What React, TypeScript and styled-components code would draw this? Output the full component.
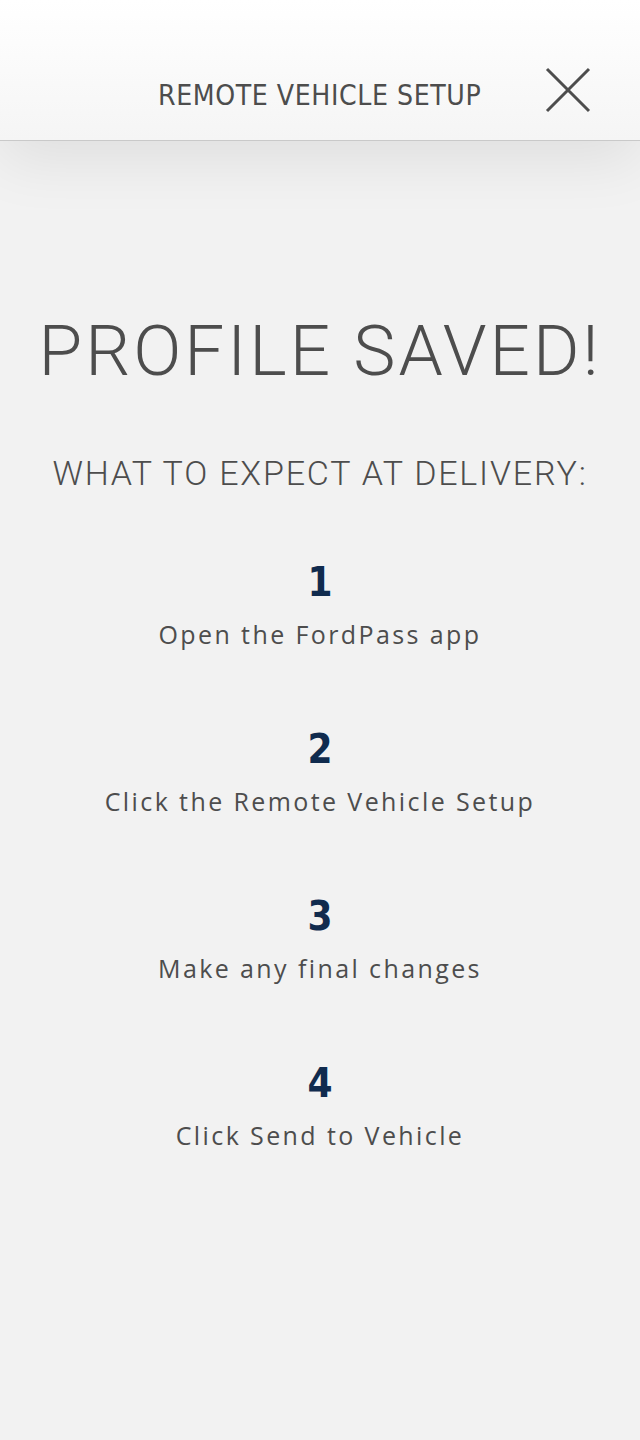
import React from 'react'
import styled, { createGlobalStyle } from 'styled-components'

const ink = '#4d4d4d'
const navy = '#102b4e'
const condensed = '"DejaVu Sans Condensed", "Liberation Sans Narrow", "DejaVu Sans", sans-serif'
const light = 'Roboto, "DejaVu Sans Condensed", sans-serif'

const GlobalStyle = createGlobalStyle`
  html, body {
    margin: 0;
    padding: 0;
    background: #f2f2f2;
  }
  * {
    box-sizing: border-box;
  }
`

const Page = styled.div`
  width: 640px;
  min-height: 1440px;
  background: #f2f2f2;
  display: flex;
  flex-direction: column;
`

const TopBar = styled.header`
  position: relative;
  height: 141px;
  display: flex;
  align-items: center;
  justify-content: center;
  padding-top: 50px;
  background: linear-gradient(180deg, #ffffff 0%, #f5f5f5 100%);
  border-bottom: 1px solid #c9c9c9;
  box-shadow: 0 20px 60px rgba(0, 0, 0, 0.08);
  z-index: 1;
`

const BarTitle = styled.h1`
  margin: 0;
  font-family: ${condensed};
  font-weight: 400;
  font-size: 29px;
  letter-spacing: 0.6px;
  color: ${ink};
  transform: scaleX(0.97);
`

const CloseButton = styled.button`
  position: absolute;
  right: 48px;
  top: 66px;
  width: 48px;
  height: 48px;
  padding: 0;
  border: 0;
  background: none;
  display: flex;
  align-items: center;
  justify-content: center;
`

const Content = styled.main`
  display: flex;
  flex-direction: column;
  align-items: center;
  padding-top: 170px;
`

const Headline = styled.h2`
  margin: 0;
  font-family: ${light};
  font-weight: 300;
  font-size: 71px;
  line-height: 80px;
  letter-spacing: 3px;
  color: ${ink};
`

const Subhead = styled.h3`
  margin: 62px 0 0;
  font-family: ${light};
  font-weight: 300;
  font-size: 34px;
  line-height: 40px;
  letter-spacing: 1.8px;
  color: ${ink};
`

const Steps = styled.ol`
  list-style: none;
  margin: 66px 0 0;
  padding: 0;
  display: flex;
  flex-direction: column;
  gap: 77px;
  align-items: center;
`

const Step = styled.li`
  display: flex;
  flex-direction: column;
  align-items: center;
  gap: 14px;
`

const StepNumber = styled.span`
  font-family: ${condensed};
  font-weight: 700;
  font-size: 40px;
  line-height: 46px;
  color: ${navy};
`

const StepText = styled.span`
  font-family: "Open Sans", "DejaVu Sans", sans-serif;
  font-size: 25px;
  line-height: 30px;
  letter-spacing: 2.4px;
  color: ${ink};
`

const steps = [
  'Open the FordPass app',
  'Click the Remote Vehicle Setup',
  'Make any final changes',
  'Click Send to Vehicle',
]

export default function App() {
  return (
    <Page>
      <GlobalStyle />
      <TopBar>
        <BarTitle>REMOTE VEHICLE SETUP</BarTitle>
        <CloseButton aria-label="Close">
          <svg width="46" height="46" viewBox="0 0 46 46">
            <path d="M2 2 L44 44 M44 2 L2 44" stroke={ink} strokeWidth="3" />
          </svg>
        </CloseButton>
      </TopBar>
      <Content>
        <Headline>PROFILE SAVED!</Headline>
        <Subhead>WHAT TO EXPECT AT DELIVERY:</Subhead>
        <Steps>
          {steps.map((text, i) => (
            <Step key={text}>
              <StepNumber>{i + 1}</StepNumber>
              <StepText>{text}</StepText>
            </Step>
          ))}
        </Steps>
      </Content>
    </Page>
  )
}
